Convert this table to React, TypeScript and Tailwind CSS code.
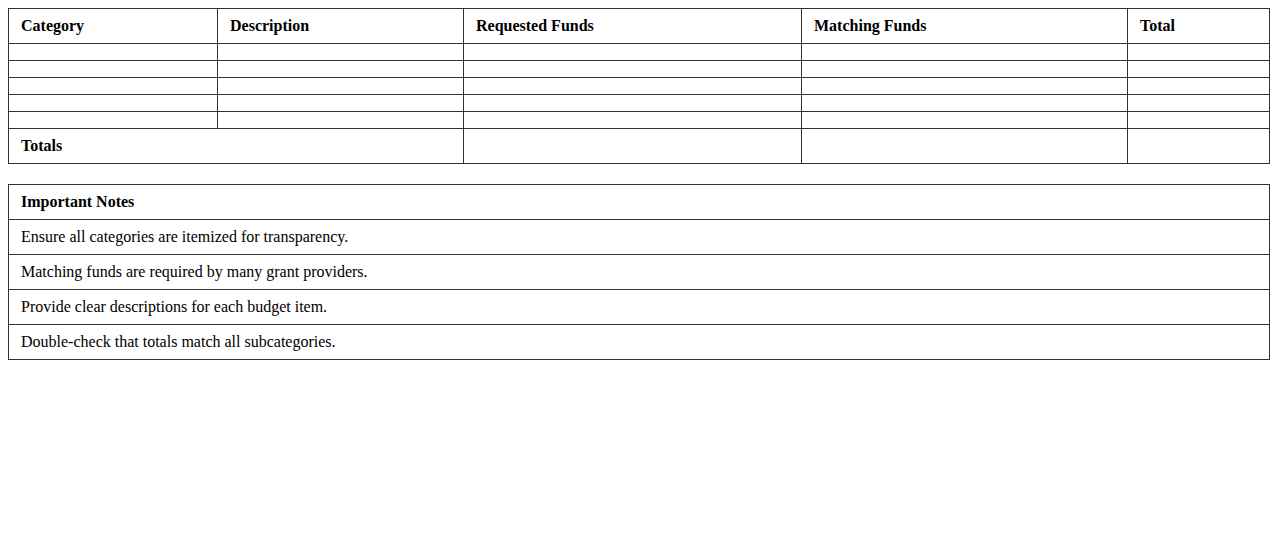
const headers = ['Category', 'Description', 'Requested Funds', 'Matching Funds', 'Total']

const notes = [
  'Ensure all categories are itemized for transparency.',
  'Matching funds are required by many grant providers.',
  'Provide clear descriptions for each budget item.',
  'Double-check that totals match all subcategories.',
]

const cell = 'border border-[#333] px-3 py-2 text-left align-middle'

export default function App() {
  return (
    <div className="p-2 text-black text-[16px] leading-[18px] font-['Liberation_Serif',serif] bg-white min-h-[550px]">
      <table className="w-full table-fixed border-collapse mb-5">
        <colgroup>
          <col className="w-[209px]" />
          <col className="w-[246px]" />
          <col className="w-[338px]" />
          <col className="w-[326px]" />
          <col />
        </colgroup>
        <thead>
          <tr>
            {headers.map((h) => (
              <th key={h} className={`${cell} font-bold`}>
                {h}
              </th>
            ))}
          </tr>
        </thead>
        <tbody>
          {[0, 1, 2, 3, 4].map((r) => (
            <tr key={r}>
              {headers.map((h) => (
                <td key={h} className={cell}></td>
              ))}
            </tr>
          ))}
          <tr>
            <td colSpan={2} className={`${cell} font-bold`}>
              Totals
            </td>
            <td className={cell}></td>
            <td className={cell}></td>
            <td className={cell}></td>
          </tr>
        </tbody>
      </table>

      <table className="w-full border-collapse">
        <thead>
          <tr>
            <th className={`${cell} font-bold`}>Important Notes</th>
          </tr>
        </thead>
        <tbody>
          {notes.map((n) => (
            <tr key={n}>
              <td className={cell}>{n}</td>
            </tr>
          ))}
        </tbody>
      </table>
    </div>
  )
}
